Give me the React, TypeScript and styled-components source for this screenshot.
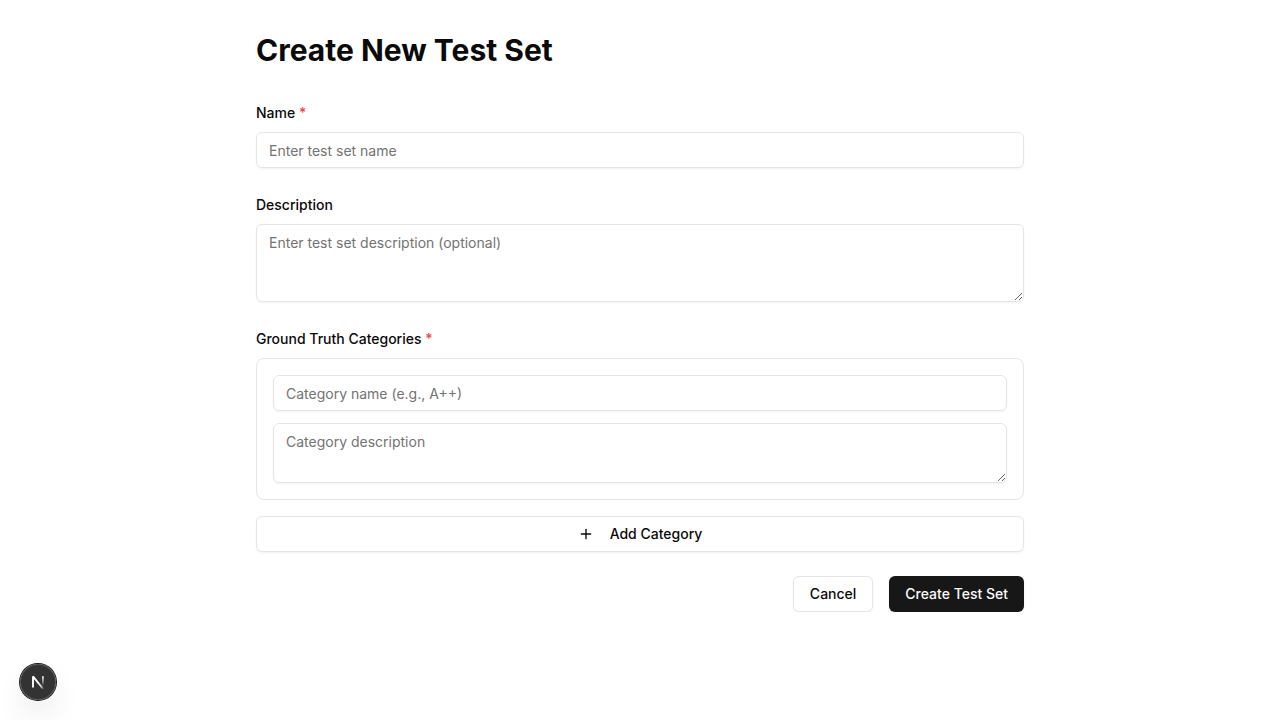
import React from 'react';
import styled, { createGlobalStyle, css } from 'styled-components';
import { Plus } from 'lucide-react';

const GlobalStyle = createGlobalStyle`
  *, *::before, *::after { box-sizing: border-box; }
  body {
    margin: 0;
    background: #fff;
    color: #0a0a0a;
    font-family: Inter, "Liberation Sans", sans-serif;
    line-height: 1.5;
    -webkit-font-smoothing: antialiased;
  }
`;

const Page = styled.main`
  width: 768px;
  margin: 0 auto;
  padding-top: 32px;
`;

const Title = styled.h1`
  margin: 0 0 32px;
  font-size: 30px;
  line-height: 36px;
  font-weight: 700;
`;

const Form = styled.form`
  display: flex;
  flex-direction: column;
  gap: 24px;
`;

const Field = styled.div`
  display: flex;
  flex-direction: column;
`;

const Label = styled.label`
  margin: 6px 0 12px;
  font-size: 14px;
  line-height: 14px;
  font-weight: 500;
`;

const Required = styled.span`
  color: #ef4444;
`;

const control = css`
  display: block;
  width: 100%;
  border: 1px solid #e5e5e5;
  border-radius: 6px;
  background: transparent;
  color: inherit;
  font-family: inherit;
  font-size: 14px;
  line-height: 20px;
  box-shadow: 0 1px 2px 0 rgba(0, 0, 0, 0.05);
  &::placeholder { color: #737373; opacity: 1; }
`;

const Input = styled.input`
  ${control}
  height: 36px;
  padding: 4px 12px;
`;

const TextArea = styled.textarea<{ $height: number }>`
  ${control}
  height: ${(p) => p.$height}px;
  padding: 8px 12px;
  resize: vertical;
`;

const Categories = styled.div`
  display: flex;
  flex-direction: column;
  gap: 16px;
`;

const Card = styled.div`
  display: flex;
  flex-direction: column;
  gap: 12px;
  padding: 16px;
  border: 1px solid #e5e5e5;
  border-radius: 8px;
`;

const Button = styled.button<{ $primary?: boolean }>`
  display: inline-flex;
  align-items: center;
  justify-content: center;
  gap: 8px;
  height: 36px;
  padding: 0 16px;
  border: ${(p) => (p.$primary ? '0' : '1px solid #e5e5e5')};
  border-radius: 6px;
  background: ${(p) => (p.$primary ? '#171717' : '#fff')};
  color: ${(p) => (p.$primary ? '#fafafa' : '#0a0a0a')};
  font-family: inherit;
  font-size: 14px;
  line-height: 20px;
  font-weight: 500;
  white-space: nowrap;
  box-shadow: 0 1px 2px 0 rgba(0, 0, 0, ${(p) => (p.$primary ? 0.1 : 0.05)});
  svg { margin-right: 8px; }
`;

const Actions = styled.div`
  display: flex;
  justify-content: flex-end;
  gap: 16px;
`;

const DevBadge = styled.div`
  position: fixed;
  left: 20px;
  bottom: 20px;
  display: grid;
  place-items: center;
  width: 36px;
  height: 36px;
  border-radius: 50%;
  background: rgba(0, 0, 0, 0.8);
  box-shadow: 0 0 0 1px #171717, inset 0 0 0 1px rgba(255, 255, 255, 0.14),
    0 16px 32px -8px rgba(0, 0, 0, 0.24);
`;

function NextMark() {
  return (
    <svg width="36" height="36" viewBox="0 0 36 36" fill="none">
      <defs>
        <linearGradient id="diagonal" x1="17.5" y1="18.5" x2="23.4" y2="25.8" gradientUnits="userSpaceOnUse">
          <stop stopColor="white" />
          <stop offset="0.6" stopColor="white" stopOpacity="0.75" />
          <stop offset="1" stopColor="white" stopOpacity="0" />
        </linearGradient>
        <linearGradient id="stem" x1="22.9" y1="12.4" x2="22.9" y2="22" gradientUnits="userSpaceOnUse">
          <stop stopColor="white" />
          <stop offset="1" stopColor="white" stopOpacity="0" />
        </linearGradient>
      </defs>
      <path d="M23.2 25 L13 12.4 V23.6" stroke="url(#diagonal)" strokeWidth="1.9" strokeLinejoin="bevel" />
      <path d="M22.9 12.2 V23.6" stroke="url(#stem)" strokeWidth="1.7" />
    </svg>
  );
}

export default function App() {
  return (
    <>
      <GlobalStyle />
      <Page>
        <Title>Create New Test Set</Title>
        <Form>
          <Field>
            <Label htmlFor="name">Name <Required>*</Required></Label>
            <Input id="name" placeholder="Enter test set name" />
          </Field>
          <Field>
            <Label htmlFor="description">Description</Label>
            <TextArea id="description" $height={78} placeholder="Enter test set description (optional)" />
          </Field>
          <Field>
            <Label as="span">Ground Truth Categories <Required>*</Required></Label>
            <Categories>
              <Card>
                <Input placeholder="Category name (e.g., A++)" />
                <TextArea $height={60} placeholder="Category description" />
              </Card>
              <Button type="button"><Plus size={16} />Add Category</Button>
            </Categories>
          </Field>
          <Actions>
            <Button type="button">Cancel</Button>
            <Button type="button" $primary>Create Test Set</Button>
          </Actions>
        </Form>
      </Page>
      <DevBadge><NextMark /></DevBadge>
    </>
  );
}
